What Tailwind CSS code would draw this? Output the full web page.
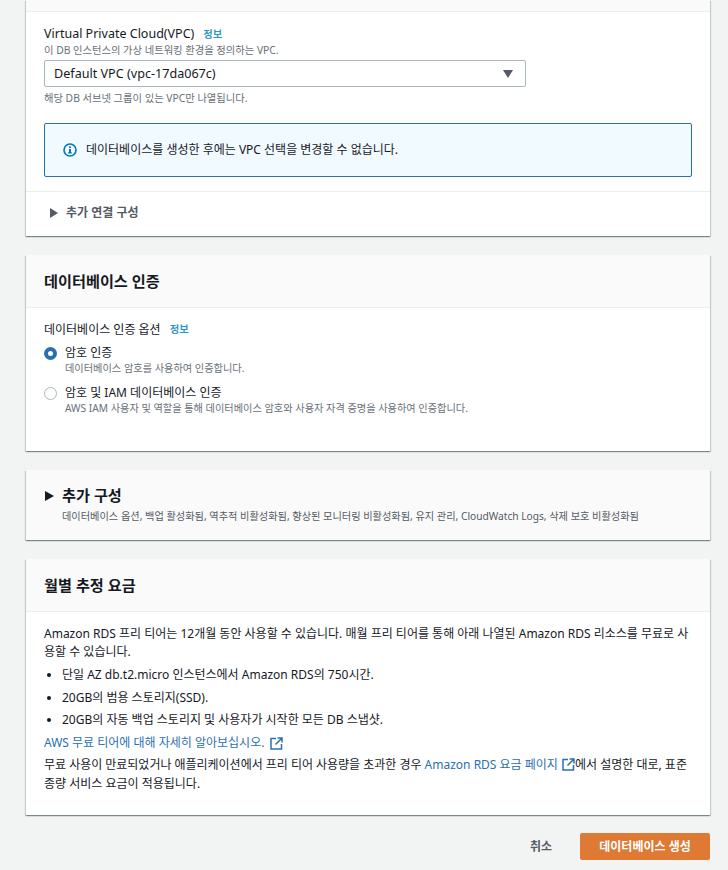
<!DOCTYPE html>
<html lang="ko">
<head>
  <meta charset="UTF-8" />
  <title>데이터베이스 생성</title>
  <script src="https://cdn.jsdelivr.net/npm/@tailwindcss/browser@4"></script>
</head>
<body class="bg-[#f2f3f3] font-['Noto_Sans','Noto_Sans_CJK_KR',sans-serif] text-[#16191f] h-[870px] overflow-hidden">
  <div class="ml-[26px] w-[684px]">

    <!-- Connectivity -->
    <section class="bg-white shadow-[0_1px_1px_0_rgba(0,28,36,0.3),1px_1px_1px_0_rgba(0,28,36,0.15),-1px_1px_1px_0_rgba(0,28,36,0.15)] h-[236px]">
      <div class="h-[12px] bg-[#fafafa] border-b border-[#eaeded]"></div>
      <div class="px-[18px] pt-[14px] h-[180px] border-b border-[#eaeded]">
        <div class="flex items-center h-[16px] text-[12.5px] leading-[16px]">
          <span>Virtual Private Cloud(VPC)</span>
          <a class="ml-[9px] text-[10.3px] font-semibold text-[#2e97c5]">정보</a>
        </div>
        <p class="text-[10.3px] leading-[14px] text-[#687078] mt-[1px]">이 DB 인스턴스의 가상 네트워킹 환경을 정의하는 VPC.</p>
        <div class="mt-[3px] w-[482px] h-[27px] border border-[#aab7b8] rounded-[2px] flex items-center justify-between pl-[9px] pr-[12px] text-[12.6px]">
          <span class="pt-[2px]">Default VPC (vpc-17da067c)</span>
          <svg width="10" height="8" viewBox="0 0 10 8"><path d="M0 0h10L5 8z" fill="#545b64"/></svg>
        </div>
        <p class="text-[10.3px] leading-[14px] text-[#687078] mt-[4px]">해당 DB 서브넷 그룹이 있는 VPC만 나열됩니다.</p>
        <div class="mt-[18px] w-[648px] h-[54px] border border-[#2a70b0] rounded-[2px] bg-[#f1faff] flex items-center pl-[18px] text-[12px]">
          <svg width="14" height="14" viewBox="0 0 14 14" class="mr-[9px]"><circle cx="7" cy="7" r="6" fill="none" stroke="#0073bb" stroke-width="1.6"/><rect x="6" y="6" width="2" height="4.2" fill="#0073bb"/><rect x="6" y="3.4" width="2" height="1.6" fill="#0073bb"/><rect x="5" y="9.4" width="4" height="1" fill="#0073bb"/></svg>
          <span>데이터베이스를 생성한 후에는 VPC 선택을 변경할 수 없습니다.</span>
        </div>
      </div>
      <div class="flex items-center h-[42px] pl-[24px] text-[12px] font-semibold text-[#545b64]">
        <svg width="8" height="10" viewBox="0 0 8 10" class="mr-[8px]"><path d="M0 0l8 5-8 5z" fill="#545b64"/></svg>
        <span>추가 연결 구성</span>
      </div>
    </section>

    <!-- Auth -->
    <section class="mt-[19px] bg-white shadow-[0_1px_1px_0_rgba(0,28,36,0.3),1px_1px_1px_0_rgba(0,28,36,0.15),-1px_1px_1px_0_rgba(0,28,36,0.15)] h-[196px]">
      <div class="h-[53px] bg-[#fafafa] border-b border-[#eaeded] flex items-center px-[18px] text-[15.2px] font-semibold">데이터베이스 인증</div>
      <div class="px-[18px] pt-[14px]">
        <div class="flex items-center h-[16px] text-[12px]">
          <span>데이터베이스 인증 옵션</span>
          <a class="ml-[9px] text-[10.3px] font-semibold text-[#2e97c5]">정보</a>
        </div>
        <div class="flex mt-[7px]">
          <span class="mt-[2px] w-[13px] h-[13px] rounded-full border-[4px] border-[#2a70b0] bg-white"></span>
          <div class="ml-[8px]">
            <div class="text-[12px] leading-[16px]">암호 인증</div>
            <div class="text-[10.2px] leading-[14px] text-[#687078]">데이터베이스 암호를 사용하여 인증합니다.</div>
          </div>
        </div>
        <div class="flex mt-[10px]">
          <span class="mt-[2px] w-[13px] h-[13px] rounded-full border border-[#aab7b8] bg-white"></span>
          <div class="ml-[8px]">
            <div class="text-[12px] leading-[16px]">암호 및 IAM 데이터베이스 인증</div>
            <div class="text-[10.2px] leading-[14px] text-[#687078]">AWS IAM 사용자 및 역할을 통해 데이터베이스 암호와 사용자 자격 증명을 사용하여 인증합니다.</div>
          </div>
        </div>
      </div>
    </section>

    <!-- Additional config -->
    <section class="mt-[19px] bg-[#fafafa] shadow-[0_1px_1px_0_rgba(0,28,36,0.3),1px_1px_1px_0_rgba(0,28,36,0.15),-1px_1px_1px_0_rgba(0,28,36,0.15)] h-[70px] pl-[19px] pt-[15px] flex">
      <svg width="9" height="10" viewBox="0 0 9 10" class="mt-[6px]"><path d="M0 0l9 5-9 5z" fill="#16191f"/></svg>
      <div class="ml-[8px]">
        <div class="text-[15.2px] leading-[20px] font-semibold">추가 구성</div>
        <div class="text-[10.2px] leading-[14px] text-[#545b64] mt-[4px]">데이터베이스 옵션, 백업 활성화됨, 역추적 비활성화됨, 향상된 모니터링 비활성화됨, 유지 관리, CloudWatch Logs, 삭제 보호 비활성화됨</div>
      </div>
    </section>

    <!-- Estimated cost -->
    <section class="mt-[19px] bg-white shadow-[0_1px_1px_0_rgba(0,28,36,0.3),1px_1px_1px_0_rgba(0,28,36,0.15),-1px_1px_1px_0_rgba(0,28,36,0.15)] h-[256px]">
      <div class="h-[53px] bg-[#fafafa] border-b border-[#eaeded] flex items-center px-[18px] text-[15.2px] font-semibold">월별 추정 요금</div>
      <div class="px-[18px] pt-[13px] text-[12px] leading-[18px]">
        <p>Amazon RDS 프리 티어는 12개월 동안 사용할 수 있습니다. 매월 프리 티어를 통해 아래 나열된 Amazon RDS 리소스를 무료로 사용할 수 있습니다.</p>
        <ul class="list-disc pl-[18px] mt-[5px] space-y-[4.5px]">
          <li>단일 AZ db.t2.micro 인스턴스에서 Amazon RDS의 750시간.</li>
          <li>20GB의 범용 스토리지(SSD).</li>
          <li>20GB의 자동 백업 스토리지 및 사용자가 시작한 모든 DB 스냅샷.</li>
        </ul>
        <p class="mt-[5px]">
          <a class="text-[#2a70b0] inline-flex items-center">AWS 무료 티어에 대해 자세히 알아보십시오.
            <svg width="13" height="13" viewBox="0 0 13 13" class="ml-[6px]"><path d="M6 1.5H1v10.5h10.5V7M7.5 1h4.5v4.5M12 1L5.5 7.5" fill="none" stroke="#2a70b0" stroke-width="1.5"/></svg>
          </a>
        </p>
        <p class="mt-[3px] leading-[19px]"><span class="tracking-[-0.02px]">무료 사용이 만료되었거나 애플리케이션에서 프리 티어 사용량을 초과한 경우</span> <a class="text-[#2a70b0]">Amazon RDS 요금 페이지 <svg width="13" height="13" viewBox="0 0 13 13" class="inline-block align-[-2px] ml-[1px]"><path d="M6 1.5H1v10.5h10.5V7M7.5 1h4.5v4.5M12 1L5.5 7.5" fill="none" stroke="#2a70b0" stroke-width="1.5"/></svg></a>에서 설명한 대로, 표준 종량 서비스 요금이 적용됩니다.</p>
      </div>
    </section>

    <!-- Actions -->
    <div class="mt-[18px] flex justify-end items-center">
      <button class="text-[12px] font-semibold text-[#545b64] mr-[28px]">취소</button>
      <button class="w-[130px] h-[27px] rounded-[2px] bg-[#de7a33] text-white text-[12px] font-semibold">데이터베이스 생성</button>
    </div>
  </div>
</body>
</html>
